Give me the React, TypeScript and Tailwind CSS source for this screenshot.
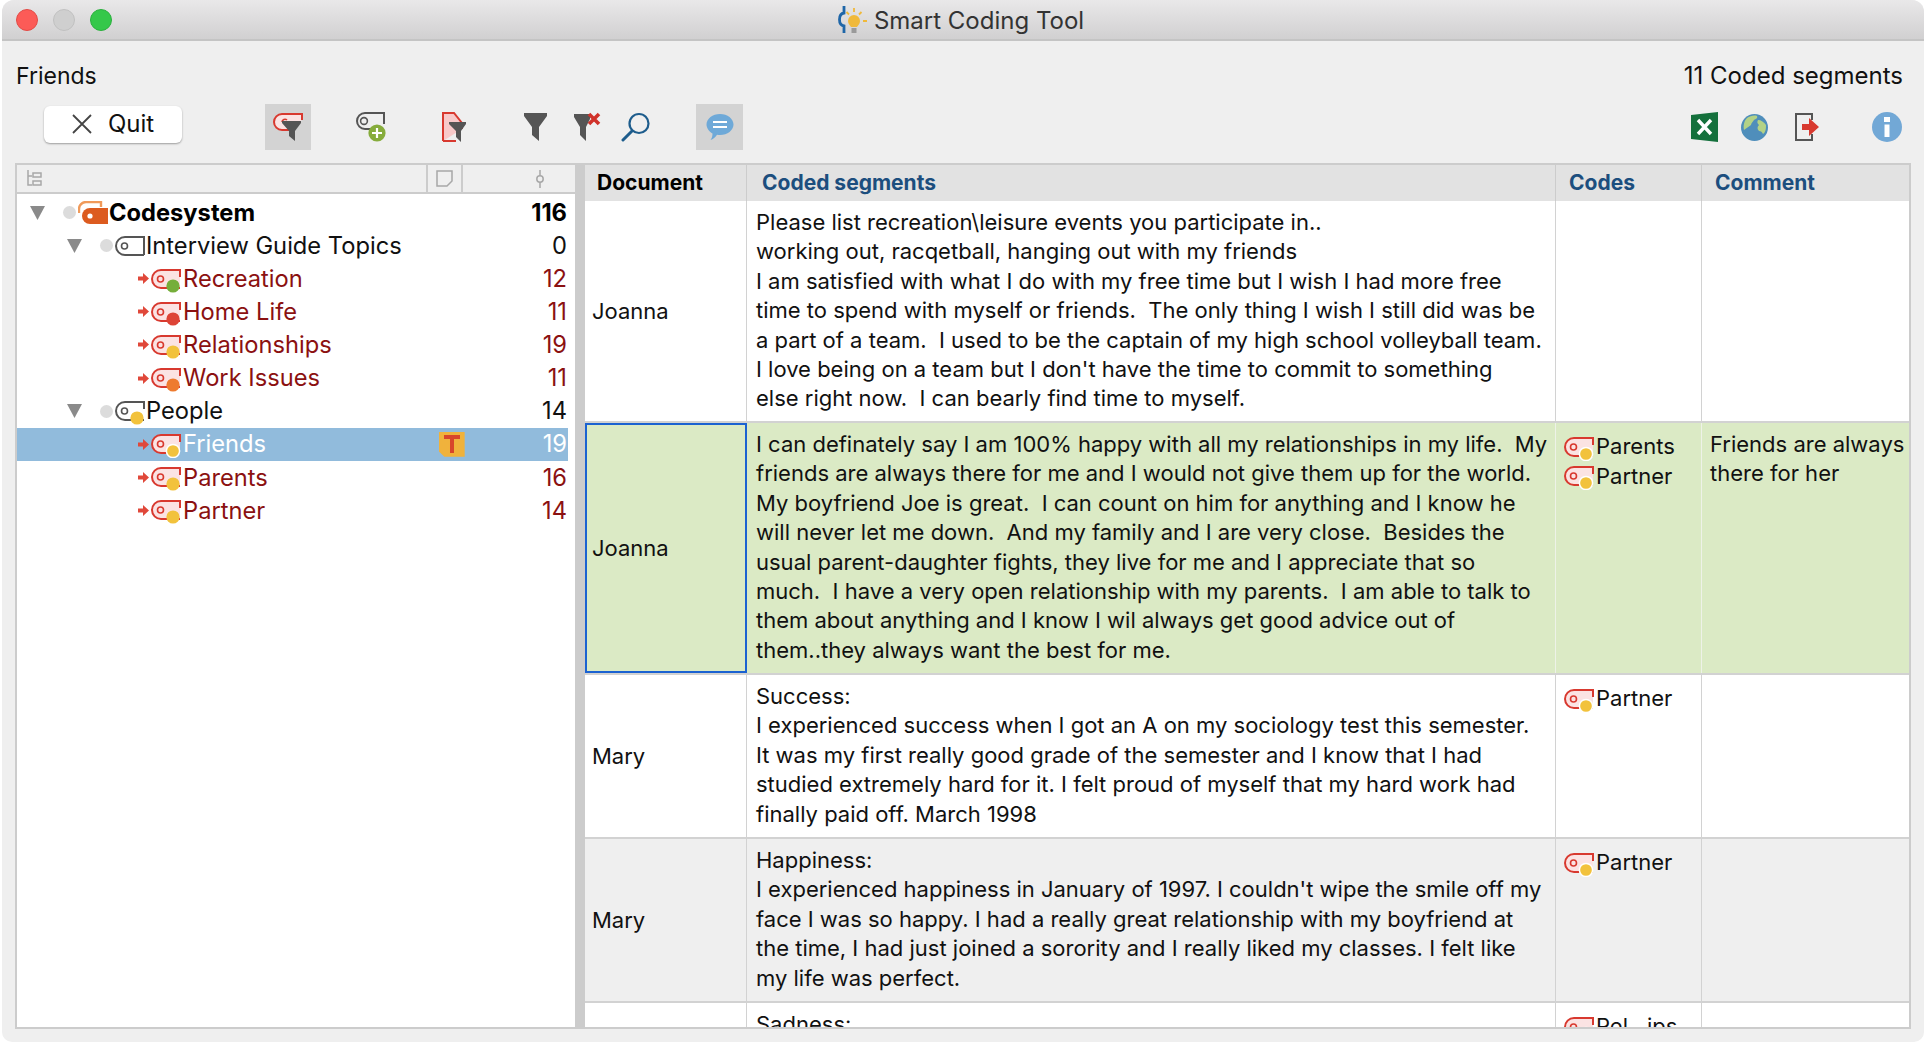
import React from 'react';

const RED = 'text-[#8b1111]';

function CodeIcon({ dot, tone = 'red', ring = false }: { dot?: string; tone?: 'red' | 'grey'; ring?: boolean }) {
  const stroke = tone === 'red' ? '#d8392f' : '#555555';
  const fill = tone === 'red' ? '#fbe3e3' : '#ffffff';
  return (
    <svg width="30" height="28" viewBox="0 0 30 28" className="shrink-0">
      <path d="M29 12V5H10a9 9 0 0 0 0 18h19" fill={fill} stroke={stroke} strokeWidth="2" />
      <path d="M29 5v18" stroke={dot ? 'none' : stroke} strokeWidth="2" />
      <circle cx="9.500" cy="14" r="3" fill="none" stroke={stroke} strokeWidth="1.600" />
      {dot && <circle cx="22" cy="21" r="6.600" fill={dot} stroke={ring ? '#ffffff' : 'none'} strokeWidth={ring ? 1.500 : 0} />}
    </svg>
  );
}

function Triangle() {
  return (
    <svg width="15" height="14" viewBox="0 0 15 14" className="shrink-0">
      <path d="M0 0h15L7.500 14z" fill="#8a8a8a" />
    </svg>
  );
}

function GreyDot() {
  return <div className="w-[13px] h-[13px] rounded-full bg-[#dcdcdc] shrink-0" />;
}

function Arrow() {
  return (
    <svg width="11" height="11" viewBox="0 0 11 11" className="shrink-0">
      <path d="M0 3.500h5V0l6 5.500L5 11V7.500H0z" fill="#e0483a" />
    </svg>
  );
}

function Funnel() {
  return (
    <svg width="23" height="28" viewBox="0 0 23 28">
      <path d="M0 0h23v3l-8 11v14l-7-6v-8L0 3z" fill="#555555" />
    </svg>
  );
}

function TreeRow({ label, count, dot }: { label: string; count: string; dot: string }) {
  return (
    <div className={`flex items-center h-[33.1px] pl-[121px] pr-[1px] ${RED}`}>
      <Arrow />
      <div className="ml-[2px] mr-[2px]"><CodeIcon dot={dot} /></div>
      <span>{label}</span>
      <span className="ml-auto">{count}</span>
    </div>
  );
}

function Lines({ lines }: { lines: string[] }) {
  return (
    <>
      {lines.map((l, i) => (
        <div key={i} className="whitespace-pre h-[29.4px] leading-[29.4px]">{l}</div>
      ))}
    </>
  );
}

function CodeCell({ names, divider }: { names: string[]; divider: string }) {
  return (
    <div className={`w-[146px] shrink-0 border-r pl-[8px] pt-[9px] ${divider}`}>
      {names.map((n) => (
        <div key={n} className="flex items-center h-[29.4px] whitespace-nowrap">
          <CodeIcon dot="#f2c23c" ring />
          <span className="ml-[2px]">{n}</span>
        </div>
      ))}
    </div>
  );
}

function TableRow({ doc, lines, codes, comment, h, bg, selected }: {
  doc: string; lines: string[]; codes: string[]; comment?: string[]; h: string; bg: string; selected?: boolean;
}) {
  const divider = selected ? 'border-[#eef2e8]' : 'border-[#d2d2d2]';
  return (
    <div className={`flex shrink-0 border-b-2 border-[#d2d2d2] ${h} ${bg}`}>
      <div className={selected
        ? 'w-[162px] shrink-0 flex items-center pl-[5px] border-2 border-[#1b62d1]'
        : 'w-[162px] shrink-0 flex items-center pl-[7px] border-r border-[#d2d2d2]'}>{doc}</div>
      <div className={`w-[809px] shrink-0 border-r pl-[9px] pt-[7px] ${divider}`}><Lines lines={lines} /></div>
      <CodeCell names={codes} divider={divider} />
      <div className="flex-1 pl-[8px] pt-[7px]">{comment && <Lines lines={comment} />}</div>
    </div>
  );
}

export default function App() {
  return (
    <div className="w-[1924px] h-[1042px] bg-white pl-[2px] overflow-hidden font-['Inter','Liberation_Sans',sans-serif] text-[22px] text-[#111111]">
      <div className="h-full flex flex-col bg-[#efefef] rounded-t-[12px] rounded-b-[10px] overflow-hidden">
        {/* Title bar */}
        <div className="h-[41px] shrink-0 flex items-center bg-gradient-to-b from-[#e9e8e9] to-[#d1d0d1] border-b-2 border-[#c4c4c4]">
          <div className="flex gap-[15px] pl-[14px]">
            <div className="w-[22px] h-[22px] rounded-full bg-[#fc5b57] border border-[#e24b46]" />
            <div className="w-[22px] h-[22px] rounded-full bg-[#cfcfcf] border border-[#c0c0c0]" />
            <div className="w-[22px] h-[22px] rounded-full bg-[#35c84a] border border-[#2cb03f]" />
          </div>
          <div className="flex-1 flex items-center justify-center pr-[117px] gap-[6px] text-[24px] text-[#333333]">
            <svg width="33" height="28" viewBox="0 0 33 28">
              <path d="M9 0v7C3 8 3 19 9 20v7" fill="none" stroke="#1f66a8" strokeWidth="2.800" />
              <path d="M13 15a6 6 0 1 1 12 0c0 3-2 4-3 6h-6c-1-2-3-3-3-6z" fill="#f0b93a" />
              <rect x="16.500" y="22" width="5" height="5" fill="#9a9a9a" />
              <path d="M19 2v4M11.500 6l2.500 2.500M26.500 6L24 8.500M28 15h4" stroke="#f0b93a" strokeWidth="1.800" />
            </svg>
            <span className="pt-[3px]">Smart Coding Tool</span>
          </div>
        </div>

        {/* Caption */}
        <div className="h-[64px] shrink-0 flex items-center justify-between pl-[14px] pr-[21px] pt-[6px]">
          <span className="text-[23px]">Friends</span>
          <span className="text-[24px]">11 Coded segments</span>
        </div>

        {/* Toolbar */}
        <div className="h-[58px] shrink-0 flex items-center pl-[42px] pr-[22px] pb-[14px]">
          <button className="w-[138px] h-[37px] mb-[6px] bg-white rounded-[6px] shadow-[0_1px_2px_rgba(0,0,0,0.35)] flex items-center justify-center gap-[16px] text-[24px] text-[#111111]">
            <svg width="20" height="20" viewBox="0 0 20 20"><path d="M1 1l18 18M19 1L1 19" stroke="#444444" strokeWidth="1.800" /></svg>
            Quit
          </button>
          <div className="ml-[83px] w-[46px] h-[46px] bg-[#d3d3d3] flex items-center justify-center">
            <svg width="32" height="30" viewBox="0 0 32 30">
              <path d="M30 8V2H10a8 8 0 0 0 0 16h8" fill="#fbe3e3" stroke="#d8392f" strokeWidth="2" />
              <path d="M10 10a3 3 0 0 1 5-2" fill="none" stroke="#d8392f" strokeWidth="1.600" />
              <path d="M10 9h19v2l-6 8v10l-6-5v-5L10 11z" fill="#555555" />
            </svg>
          </div>
          <div className="ml-[43px]">
            <svg width="32" height="32" viewBox="0 0 32 32">
              <path d="M30 13V2H11a8 8 0 0 0 0 16h7" fill="none" stroke="#555555" strokeWidth="2" />
              <circle cx="10" cy="10" r="3.400" fill="none" stroke="#555555" strokeWidth="1.600" />
              <circle cx="23" cy="22" r="8.600" fill="#86ac3c" />
              <path d="M23 17v10M18 22h10" stroke="#ffffff" strokeWidth="2.200" />
            </svg>
          </div>
          <div className="ml-[56px]">
            <svg width="24" height="30" viewBox="0 0 24 30">
              <path d="M1 29V1h11l8 10v6" fill="#f8c9c9" stroke="#d8392f" strokeWidth="2" />
              <path d="M1 29h13" stroke="#d8392f" strokeWidth="2" />
              <path d="M7 10h17v2l-5 7v11l-5-5v-6l-7-7z" fill="#555555" />
            </svg>
          </div>
          <div className="ml-[58px]"><Funnel /></div>
          <div className="ml-[27px] mb-[1px]">
            <svg width="28" height="29" viewBox="0 0 28 29">
              <path d="M0 2h16v5l-4 8v14l-6-6v-8L0 5z" fill="#555555" />
              <path d="M15 2l10 10M25 2L15 12" stroke="#d0322a" strokeWidth="3.600" />
            </svg>
          </div>
          <div className="ml-[19px]">
            <svg width="30" height="30" viewBox="0 0 30 30">
              <circle cx="18" cy="11.500" r="9.500" fill="none" stroke="#1d5c8c" strokeWidth="2.200" />
              <path d="M11 19L2 28" stroke="#1d5c8c" strokeWidth="3" strokeLinecap="round" />
            </svg>
          </div>
          <div className="ml-[45px] w-[47px] h-[46px] bg-[#d3d3d3] flex items-center justify-center">
            <svg width="28" height="28" viewBox="0 0 28 28">
              <path d="M14 1c7.500 0 13.500 4.800 13.500 10.500S21.500 22 14 22c-1 0-2 0-3-.2C9.500 24 7 26.500 4.500 27c1.500-1.800 2-4 2-6.500C3 18.500.5 15 .5 11.500.5 5.800 6.500 1 14 1z" fill="#6ea9d8" />
              <path d="M7 9h14M7 14h14" stroke="#ffffff" strokeWidth="2.200" />
            </svg>
          </div>
          <div className="ml-auto flex items-center">
            <svg width="27" height="30" viewBox="0 0 27 30">
              <path d="M0 3L27 0v30L0 27z" fill="#14703c" />
              <path d="M7 8l13 14M20 8L7 22" stroke="#ffffff" strokeWidth="3.400" />
            </svg>
            <svg width="27" height="27" viewBox="0 0 27 27" className="ml-[23px]">
              <circle cx="13.500" cy="13.500" r="13.500" fill="#4f8ebb" />
              <path d="M6 4c3-2 7-3 10-2 1 2-1 3-3 4-1 2-3 3-3 5-2 2-5 3-7 5-1-4 0-9 3-12zM17 6c3 0 6 2 8 5 0 3 0 7-3 9-1-2-2-3-4-3-2-2-2-4 0-6-2-2-2-3-1-5z" fill="#b3d286" />
            </svg>
            <svg width="24" height="28" viewBox="0 0 24 28" className="ml-[27px]">
              <path d="M17 7V1H1v26h16v-6" fill="none" stroke="#555555" strokeWidth="2" />
              <path d="M7 11h7V5l10 9-10 9v-6H7z" fill="#d8392f" />
            </svg>
            <div className="ml-[53px] w-[30px] h-[30px] rounded-full bg-[#72a8d6] flex items-center justify-center">
              <svg width="6" height="20" viewBox="0 0 6 20"><path d="M0 0h6v5H0zM.5 7.500h5V20h-5z" fill="#ffffff" /></svg>
            </div>
          </div>
        </div>

        {/* Panels */}
        <div className="h-[866px] shrink-0 flex pl-[13px] pr-[13px]">
          {/* Code tree */}
          <div className="w-[562px] shrink-0 flex flex-col overflow-hidden border-2 border-[#cccccc] bg-white text-[23.7px]">
            <div className="h-[29px] shrink-0 flex bg-[#efefef] border-b-2 border-[#cccccc]">
              <div className="flex-1 pl-[10px] flex items-center">
                <svg width="15" height="17" viewBox="0 0 15 17"><path d="M1 0v15h4M1 6h4M6 3h8v4H6zM6 11h8v4H6z" fill="none" stroke="#a8a8a8" strokeWidth="1.500" /></svg>
              </div>
              <div className="w-[37px] border-x-2 border-[#cccccc] flex items-center justify-center">
                <svg width="17" height="17" viewBox="0 0 17 17"><path d="M1 1h15v10l-5 5H1z" fill="none" stroke="#a8a8a8" strokeWidth="1.500" /></svg>
              </div>
              <div className="w-[112px] flex items-center justify-end pr-[31px]">
                <svg width="8" height="18" viewBox="0 0 8 18"><circle cx="4" cy="9" r="3.200" fill="none" stroke="#a8a8a8" strokeWidth="1.500" /><path d="M4 0v6M4 12v6" stroke="#a8a8a8" strokeWidth="1.500" /></svg>
              </div>
            </div>
            <div className="pr-[7px] pt-[2px]">
              <div className="flex items-center h-[33.1px] pl-[13px] pr-[1px] font-bold text-black">
                <Triangle />
                <div className="ml-[18px] mr-[2px]"><GreyDot /></div>
                <svg width="30" height="24" viewBox="0 0 30 24" className="shrink-0 mr-[1px]">
                  <path d="M1 12V8a7 7 0 0 1 7-7h15v5" fill="none" stroke="#f09a5a" strokeWidth="2.400" />
                  <path d="M4 15a8 8 0 0 1 8-8h18v16H12a8 8 0 0 1-8-8z" fill="#dc5b1f" />
                  <circle cx="12" cy="15" r="2.600" fill="#ffffff" />
                </svg>
                <span>Codesystem</span>
                <span className="ml-auto">116</span>
              </div>
              <div className="flex items-center h-[33.1px] pl-[50px] pr-[1px]">
                <Triangle />
                <div className="ml-[18px] mr-[2px]"><GreyDot /></div>
                <CodeIcon tone="grey" />
                <span className="ml-[1px]">Interview Guide Topics</span>
                <span className="ml-auto">0</span>
              </div>
              <TreeRow label="Recreation" count="12" dot="#76ae3a" />
              <TreeRow label="Home Life" count="11" dot="#dd4436" />
              <TreeRow label="Relationships" count="19" dot="#f2c23c" />
              <TreeRow label="Work Issues" count="11" dot="#ee7b2f" />
              <div className="flex items-center h-[33.1px] pl-[50px] pr-[1px]">
                <Triangle />
                <div className="ml-[18px] mr-[2px]"><GreyDot /></div>
                <CodeIcon tone="grey" dot="#f2c23c" />
                <span className="ml-[1px]">People</span>
                <span className="ml-auto">14</span>
              </div>
              <div className="flex items-center h-[33.1px] pl-[121px] pr-[1px] bg-[#91bbdc] text-white">
                <Arrow />
                <div className="ml-[2px] mr-[2px]"><CodeIcon dot="#f2c23c" ring /></div>
                <span>Friends</span>
                <div className="ml-auto mr-[78px] w-[26px] h-[25px] bg-[#f0b23c] [clip-path:polygon(0_0,100%_0,100%_100%,22%_100%,0_78%)] flex items-center justify-center">
                  <svg width="16" height="18" viewBox="0 0 16 18"><path d="M0 0h16v4H10v14H6V4H0z" fill="#d8452b" /></svg>
                </div>
                <span>19</span>
              </div>
              <TreeRow label="Parents" count="16" dot="#f2c23c" />
              <TreeRow label="Partner" count="14" dot="#f2c23c" />
            </div>
          </div>

          {/* Splitter */}
          <div className="w-[8px] shrink-0 bg-[#cccccc]" />

          {/* Segment table */}
          <div className="flex-1 flex flex-col overflow-hidden bg-white border-b-2 border-r-2 border-[#cccccc]">
            <div className="h-[38px] shrink-0 flex bg-[#e2e2e2] border-t-2 border-[#cccccc] font-bold text-[21px] text-[#1c4e7e]">
              <div className="w-[162px] shrink-0 flex items-center pl-[12px] border-r border-[#cccccc] text-black">Document</div>
              <div className="w-[809px] shrink-0 flex items-center pl-[15px] border-r border-[#cccccc]">Coded segments</div>
              <div className="w-[146px] shrink-0 flex items-center pl-[13px] border-r border-[#cccccc]">Codes</div>
              <div className="flex-1 flex items-center pl-[13px]">Comment</div>
            </div>
            <TableRow
              h="h-[222px]"
              bg="bg-white"
              doc="Joanna"
              lines={[
                'Please list recreation\\leisure events you participate in..',
                'working out, racqetball, hanging out with my friends',
                'I am satisfied with what I do with my free time but I wish I had more free',
                'time to spend with myself or friends.  The only thing I wish I still did was be',
                'a part of a team.  I used to be the captain of my high school volleyball team.',
                "I love being on a team but I don't have the time to commit to something",
                'else right now.  I can bearly find time to myself.',
              ]}
              codes={[]}
            />
            <TableRow
              h="h-[252px]"
              bg="bg-[#dbeac5]"
              selected
              doc="Joanna"
              lines={[
                'I can definately say I am 100% happy with all my relationships in my life.  My',
                'friends are always there for me and I would not give them up for the world.',
                'My boyfriend Joe is great.  I can count on him for anything and I know he',
                'will never let me down.  And my family and I are very close.  Besides the',
                'usual parent-daughter fights, they live for me and I appreciate that so',
                'much.  I have a very open relationship with my parents.  I am able to talk to',
                'them about anything and I know I wil always get good advice out of',
                'them..they always want the best for me.',
              ]}
              codes={['Parents', 'Partner']}
              comment={['Friends are always', 'there for her']}
            />
            <TableRow
              h="h-[164px]"
              bg="bg-white"
              doc="Mary"
              lines={[
                'Success:',
                'I experienced success when I got an A on my sociology test this semester.',
                'It was my first really good grade of the semester and I know that I had',
                'studied extremely hard for it. I felt proud of myself that my hard work had',
                'finally paid off. March 1998',
              ]}
              codes={['Partner']}
            />
            <TableRow
              h="h-[164px]"
              bg="bg-[#efefef]"
              doc="Mary"
              lines={[
                'Happiness:',
                "I experienced happiness in January of 1997. I couldn't wipe the smile off my",
                'face I was so happy. I had a really great relationship with my boyfriend at',
                'the time, I had just joined a sorority and I really liked my classes. I felt like',
                'my life was perfect.',
              ]}
              codes={['Partner']}
            />
            <TableRow
              h="h-[164px]"
              bg="bg-white"
              doc=""
              lines={['Sadness:']}
              codes={['Rel...ips']}
            />
          </div>
        </div>
      </div>
    </div>
  );
}
